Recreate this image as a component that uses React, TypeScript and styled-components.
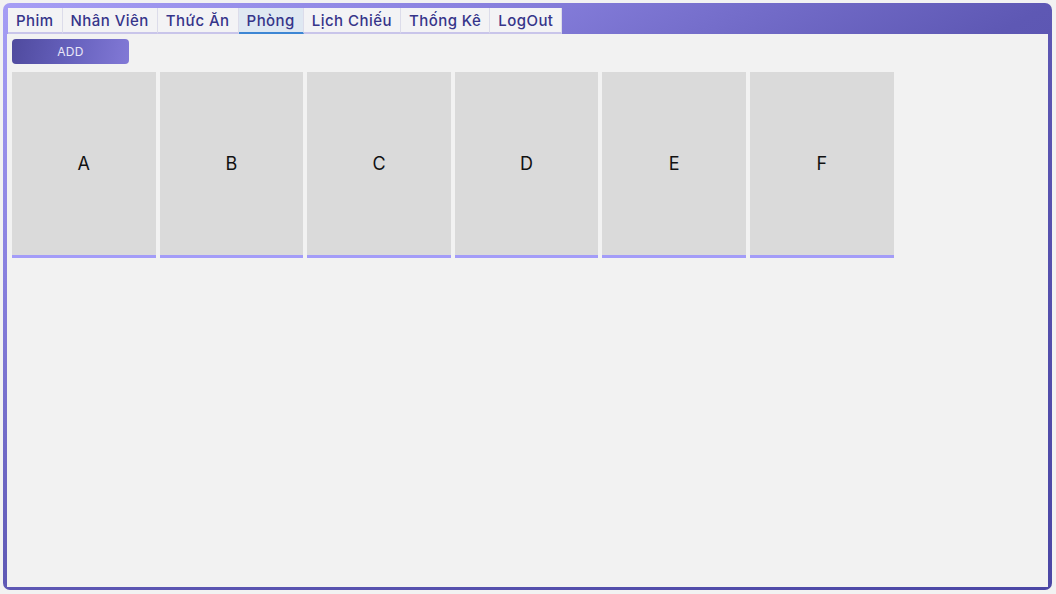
import React, { useState } from 'react'
import styled, { createGlobalStyle } from 'styled-components'

const TABS = ['Phim', 'Nhân Viên', 'Thức Ăn', 'Phòng', 'Lịch Chiếu', 'Thống Kê', 'LogOut']
const ROOMS = ['A', 'B', 'C', 'D', 'E', 'F']

const GlobalStyle = createGlobalStyle`
  html, body {
    margin: 0;
    padding: 0;
    background: #f2f2f2;
  }
  #root {
    width: 1056px;
    height: 594px;
    padding: 3px 4px 4px 3px;
    box-sizing: border-box;
  }
`

const Window = styled.div`
  display: flex;
  flex-direction: column;
  width: 100%;
  height: 100%;
  box-sizing: border-box;
  padding: 0 4px 3px 4px;
  border-radius: 7px;
  background: linear-gradient(to bottom right, #a69ef5 0%, #8a82e0 22%, #5e58b4 50%, #4b47a5 100%);
  font-family: Inter, 'Noto Sans', sans-serif;
`

const TabBar = styled.div`
  display: flex;
  align-items: flex-end;
  height: 31px;
  box-sizing: border-box;
  padding: 5px 0 0 1px;
`

const Tab = styled.div<{ active: boolean }>`
  display: flex;
  align-items: center;
  justify-content: center;
  height: 26px;
  box-sizing: border-box;
  padding: 1px 8px 0;
  font-size: 15px;
  font-weight: 500;
  letter-spacing: 0.45px;
  color: #36358a;
  background: ${p => (p.active ? '#dfe8f2' : '#f3f3f5')};
  border-right: 1px solid #dcdcea;
  border-bottom: 2px solid ${p => (p.active ? '#3d86d4' : '#c9c5ea')};
  cursor: pointer;
`

const Panel = styled.div`
  flex: 1;
  background: #f2f2f2;
  padding: 5px 5px;
  display: flex;
  flex-direction: column;
  align-items: flex-start;
`

const AddButton = styled.button`
  width: 117px;
  height: 25px;
  border: none;
  border-radius: 4px;
  background: linear-gradient(100deg, #4f4a9e 0%, #6661bd 50%, #8279d6 100%);
  color: #e8e6f8;
  font-family: inherit;
  font-size: 12px;
  letter-spacing: 0.03em;
  cursor: pointer;
`

const RoomGrid = styled.div`
  display: flex;
  gap: 4px;
  margin-top: 8px;
`

const RoomCard = styled.div`
  width: 143.6px;
  height: 186px;
  box-sizing: border-box;
  background: #dadada;
  border-bottom: 3px solid #a39cf8;
  display: flex;
  align-items: center;
  justify-content: center;
  font-size: 18px;
  color: #111;
`

export default function App() {
  const [active, setActive] = useState('Phòng')

  return (
    <>
      <GlobalStyle />
      <Window>
        <TabBar>
          {TABS.map(t => (
            <Tab key={t} active={t === active} onClick={() => setActive(t)}>
              {t}
            </Tab>
          ))}
        </TabBar>
        <Panel>
          <AddButton type="button">ADD</AddButton>
          <RoomGrid>
            {ROOMS.map(r => (
              <RoomCard key={r}>{r}</RoomCard>
            ))}
          </RoomGrid>
        </Panel>
      </Window>
    </>
  )
}
